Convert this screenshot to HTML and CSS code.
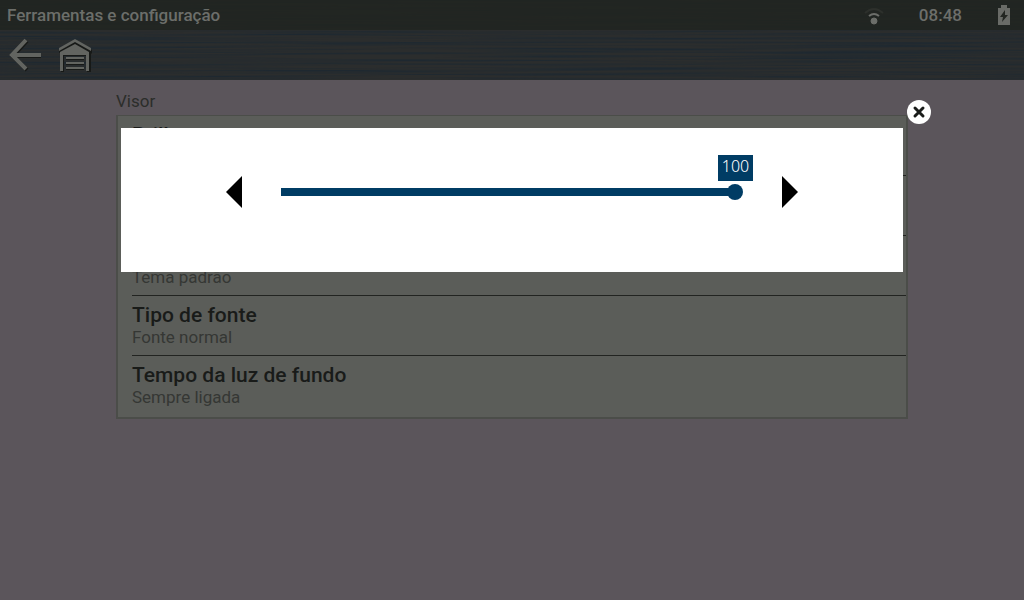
FILE: index.html
```html
<!DOCTYPE html>
<html lang="pt">
<head>
    <meta charset="UTF-8">
    <meta name="viewport" content="width=device-width, initial-scale=1.0">
    <title>Ferramentas e configuração</title>
    <link rel="stylesheet" href="styles.css">
</head>
<body>
    <header class="header">
        <!-- brushed texture behind both bars -->
        <svg class="texture" aria-hidden="true">
            <filter id="brushed" x="0" y="0" width="100%" height="100%" color-interpolation-filters="sRGB">
                <feTurbulence type="fractalNoise" baseFrequency="0.004 0.5" numOctaves="3" seed="7"/>
                <feColorMatrix values="0 0 0 0 0.09  0 0 0 0 0.15  0 0 0 0 0.2  2.6 0 0 0 -1"/>
            </filter>
            <rect width="100%" height="100%" filter="url(#brushed)"/>
        </svg>

        <div class="status-bar">
            <h1 class="page-title">Ferramentas e configuração</h1>
            <div class="status">
                <svg class="signal" width="20" height="20" viewBox="0 0 20 20" fill="none">
                    <path class="faint" d="M1 6Q10-2 19 6" stroke-width="2"/>
                    <path d="M5 9Q10 5 15 9" stroke-width="2"/>
                    <circle cx="10" cy="14" r="3"/>
                </svg>
                <span class="clock">08:48</span>
                <svg class="battery" width="12" height="20" viewBox="0 0 12 20">
                    <path fill="#696b67" d="M3 0h6v3h3v17H0V3h3z"/>
                    <path fill="#232622" d="M7 5 2 12h3l-1 5 6-7H7z"/>
                </svg>
            </div>
        </div>

        <nav class="toolbar">
            <button class="tool" type="button" aria-label="Voltar">
                <svg width="34" height="34" viewBox="0 0 34 34" fill="none" stroke-width="4">
                    <path stroke="#171917" d="M19 3 5 18l14 14M5 18h28"/>
                    <path stroke="#626460" d="M18 2 4 17l14 14M4 17h29"/>
                </svg>
            </button>
            <button class="tool" type="button" aria-label="Início">
                <svg width="34" height="34" viewBox="0 0 34 34">
                    <path fill="#171917" d="M17 2 34 12v4l-1-1v20h-4V18H6v16H3V14l-2 1v-4z"/>
                    <path fill="#626460" d="M17 1 33 10v3L17 4 1 13v-3z"/>
                    <path fill="#626460" d="M17 6 31 14v19h-3V17H5v16H2V14z"/>
                    <path fill="#171917" d="M8 21h18v1H8zM8 26h18v1H8zM8 31h18v1H8z"/>
                    <path fill="#626460" d="M8 19h18v2H8zM8 24h18v2H8zM8 29h18v2H8z"/>
                </svg>
            </button>
        </nav>
    </header>

    <main class="content">
        <h2 class="section-title">Visor</h2>
        <ul class="settings">
            <li class="setting">
                <h3 class="setting-name">Brilho</h3>
                <p class="setting-value"></p>
            </li>
            <li class="setting">
                <h3 class="setting-name"></h3>
                <p class="setting-value"></p>
            </li>
            <li class="setting">
                <h3 class="setting-name"></h3>
                <p class="setting-value">Tema padrão</p>
            </li>
            <li class="setting">
                <h3 class="setting-name">Tipo de fonte</h3>
                <p class="setting-value">Fonte normal</p>
            </li>
            <li class="setting">
                <h3 class="setting-name">Tempo da luz de fundo</h3>
                <p class="setting-value">Sempre ligada</p>
            </li>
        </ul>
    </main>

    <div class="overlay">
        <div class="popup" role="dialog" aria-label="Brilho">
            <button class="close" type="button" aria-label="Fechar">
                <svg width="24" height="24" viewBox="0 0 24 24">
                    <path d="M8 8l8 8M16 8l-8 8" stroke="#1a1c1a" stroke-width="3" stroke-linecap="round"/>
                </svg>
            </button>
            <button class="arrow" id="less" type="button" aria-label="Diminuir">
                <svg width="16" height="32" viewBox="0 0 16 32"><path d="M16 0v32L0 16z"/></svg>
            </button>
            <div class="slider">
                <input type="range" id="brightness" min="0" max="100" value="100" aria-label="Brilho">
                <output class="bubble" id="bubble" for="brightness">100</output>
            </div>
            <button class="arrow" id="more" type="button" aria-label="Aumentar">
                <svg width="16" height="32" viewBox="0 0 16 32"><path d="M0 0v32l16-16z"/></svg>
            </button>
        </div>
    </div>

    <script src="script.js"></script>
</body>
</html>
```
FILE: styles.css
```css
* {
    margin: 0;
    padding: 0;
    box-sizing: border-box;
}

body {
    background-color: #5b555b;
    color: #2b2d2a;
    font-family: Roboto, "Liberation Sans", sans-serif;
    font-size: 17px;
    line-height: 20px;
}

button {
    background: none;
    border: none;
    cursor: pointer;
}

svg {
    display: block;
}

/* Header */
.header {
    position: relative;
    background-color: #2b2d2d;
    color: #6c6e6a;
}

.texture {
    position: absolute;
    width: 100%;
    height: 100%;
    opacity: 0.6;
}

.status-bar,
.toolbar {
    position: relative;
    display: flex;
    align-items: center;
}

.status-bar {
    justify-content: space-between;
    height: 30px;
    padding: 0 14px 0 7px;
    background-color: rgba(33, 36, 31, 0.8);
}

.page-title,
.clock {
    font-size: 17px;
    font-weight: 500;
}

.status {
    display: flex;
    align-items: center;
}

.signal {
    margin-top: 4px;
    stroke: #6c6e6a;
}

.signal circle {
    fill: #6c6e6a;
}

.signal .faint {
    stroke: #2d302c;
}

.clock {
    margin: 0 36px 0 35px;
}

.toolbar {
    gap: 16px;
    height: 50px;
    padding: 0 8px;
}

/* Settings list */
.content {
    padding: 11px 116px;
}

.section-title {
    margin-bottom: 4px;
    font-size: 17px;
    font-weight: 400;
}

.settings {
    list-style: none;
    padding-left: 14px;
    background-color: #5b5d59;
    border: 2px solid #4b4d49;
    border-top-width: 1px;
}

.setting {
    padding: 7px 0 8px;
    border-bottom: 1px solid #222421;
}

.setting:last-child {
    border-bottom-color: transparent;
    padding-bottom: 9px;
}

.setting-name {
    min-height: 24px;
    color: #191b19;
    font-size: 21px;
    font-weight: 500;
    line-height: 24px;
}

.setting-value {
    min-height: 20px;
    color: #353734;
}

/* Brightness popup */
.overlay {
    position: fixed;
    inset: 0;
    padding: 128px 121px;
}

.popup {
    position: relative;
    display: flex;
    justify-content: center;
    gap: 39px;
    padding: 48px 105px 64px;
    background-color: #fff;
}

.close {
    position: absolute;
    top: -28px;
    right: -28px;
    width: 24px;
    height: 24px;
    border-radius: 50%;
    background-color: #fff;
}

.slider {
    position: relative;
    display: flex;
    align-items: center;
    flex: 1;
}

.slider input {
    appearance: none;
    width: 100%;
    height: 8px;
    background: linear-gradient(#003c64, #003c64) no-repeat left / calc(100% - 8px) 100%;
}

.slider input::-webkit-slider-thumb {
    appearance: none;
    width: 16px;
    height: 16px;
    border-radius: 50%;
    background-color: #003c64;
}

.bubble {
    position: absolute;
    top: -21px;
    right: -10px;
    width: 35px;
    height: 26px;
    background-color: #003c64;
    color: #fff;
    font-family: "Noto Sans", sans-serif;
    font-size: 16px;
    font-weight: 300;
    line-height: 22px;
    text-align: center;
}
```
FILE: script.js
```js
const slider = document.getElementById('brightness');
const bubble = document.getElementById('bubble');

function update() {
    bubble.textContent = slider.value;
    // keep the bubble centred over the thumb
    const travel = slider.clientWidth - 16;
    bubble.style.right = (travel * (1 - slider.value / 100) - 10) + 'px';
}

slider.addEventListener('input', update);

document.getElementById('less').addEventListener('click', function() {
    slider.stepDown();
    update();
});

document.getElementById('more').addEventListener('click', function() {
    slider.stepUp();
    update();
});

update();
```
